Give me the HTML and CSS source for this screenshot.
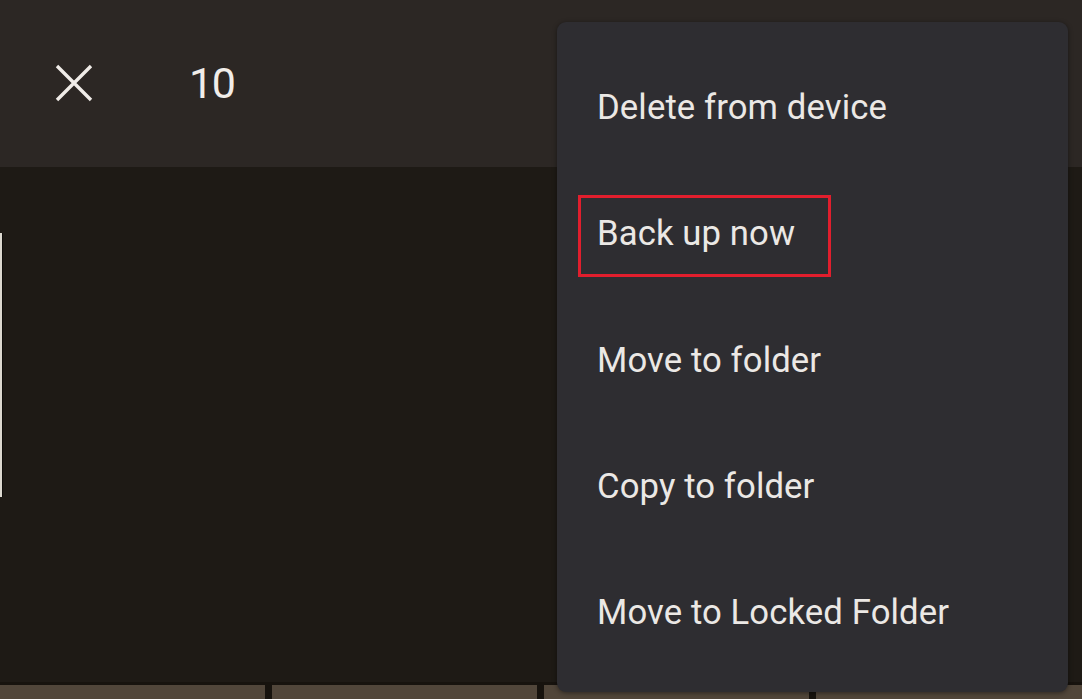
FILE: index.html
```html
<!DOCTYPE html>
<html lang="en">
<head>
<meta charset="utf-8">
<title>Selection menu</title>
<link rel="stylesheet" href="styles.css">
</head>
<body>
<div class="screen">
  <header class="topbar">
    <button class="close" aria-label="Close">
      <svg viewBox="0 0 38 38" width="38" height="38"><path d="M2 2 L36 36 M36 2 L2 36" stroke="#f0ece8" stroke-width="3.4" stroke-linecap="butt" fill="none"/></svg>
    </button>
    <span class="count">10</span>
  </header>
  <main class="grid">
    <div class="tile tile-dark wide">
      <div class="edge"></div>
    </div>
    <div class="tile tile-brown"></div>
    <div class="tile tile-brown"></div>
    <div class="tile tile-brown"></div>
    <div class="tile tile-brown"></div>
  </main>
  <nav class="menu">
    <div class="item">Delete from device</div>
    <div class="item highlighted">Back up now<span class="mark"></span></div>
    <div class="item">Move to folder</div>
    <div class="item">Copy to folder</div>
    <div class="item">Move to Locked Folder</div>
  </nav>
</div>
</body>
</html>
```

FILE: styles.css
```css
* { box-sizing: border-box; }
html, body {
  margin: 0;
  padding: 0;
  background: #1e1a15;
  font-family: Roboto, "Noto Sans", Arial, sans-serif;
  overflow: hidden;
}
.screen {
  position: relative;
  width: 1082px;
  height: 699px;
  display: flex;
  flex-direction: column;
}
.topbar {
  height: 167px;
  flex: none;
  background: #2c2724;
  display: flex;
  align-items: center;
  padding-left: 55px;
}
.close {
  background: none;
  border: 0;
  padding: 0;
  width: 38px;
  height: 38px;
  margin-top: -1px;
  display: flex;
}
.count {
  margin-left: 96px;
  color: #f1ede9;
  font-size: 43px;
  letter-spacing: -1.5px;
  line-height: 1;
  margin-top: 0;
}
.grid {
  flex: 1;
  display: grid;
  grid-template-columns: 265px 265px 265px 1fr;
  grid-template-rows: 515px 1fr;
  column-gap: 7px;
  row-gap: 3px;
  background: #17130e;
}
.tile-dark { background: #1e1a15; }
.wide { grid-column: 1 / -1; }
.tile-brown { background: #51463a; }
.edge {
  margin-top: 66px;
  width: 2px;
  height: 264px;
  background: #dcd8cf;
  box-shadow: 1px 0 0 #0f0d0a;
}
.menu {
  position: absolute;
  left: 557px;
  top: 22px;
  width: 511px;
  height: 670px;
  background: #2e2d31;
  border-radius: 9px;
  box-shadow: 0 1px 5px rgba(0,0,0,0.45);
  padding: 22px 0 17px;
  display: flex;
  flex-direction: column;
}
.item {
  position: relative;
  flex: none;
  height: 126.25px;
  display: flex;
  align-items: center;
  padding-left: 40px;
  color: #ebe8e5;
  font-size: 34.7px;
  letter-spacing: 0.1px;
}
.mark {
  position: absolute;
  left: 21px;
  top: 25px;
  width: 253px;
  height: 82px;
  border: 3px solid #e11e2d;
}
```
